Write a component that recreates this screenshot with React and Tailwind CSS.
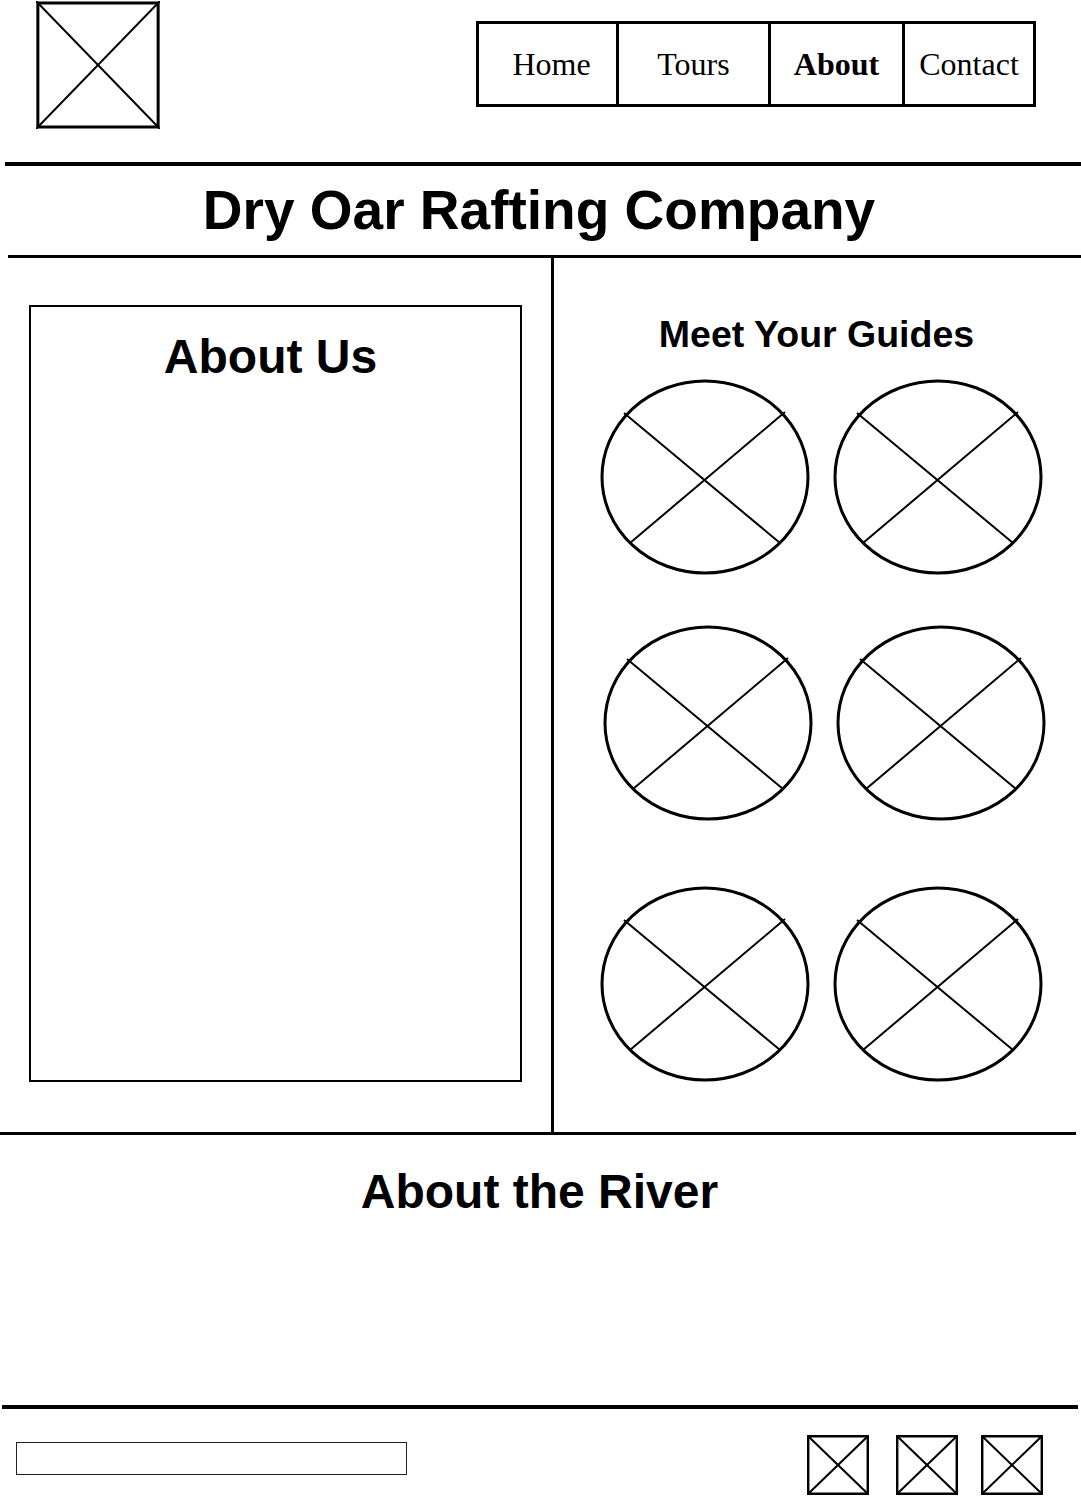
import React from "react";

const sans = { fontFamily: '"Liberation Sans", Arial, sans-serif' };

const CrossBox = ({ className }) => (
  <svg className={className} viewBox="0 0 100 100" preserveAspectRatio="none">
    <rect x="1.5" y="1.5" width="97" height="97" fill="none" stroke="black" strokeWidth="3" vectorEffect="non-scaling-stroke" />
    <line x1="0" y1="0" x2="100" y2="100" stroke="black" strokeWidth="2" vectorEffect="non-scaling-stroke" />
    <line x1="100" y1="0" x2="0" y2="100" stroke="black" strokeWidth="2" vectorEffect="non-scaling-stroke" />
  </svg>
);

const Guide = () => (
  <svg className="w-[210px] h-[196px] shrink-0" viewBox="0 0 210 196">
    <ellipse cx="105" cy="98" rx="103" ry="96" fill="none" stroke="black" strokeWidth="3" />
    <line x1="24" y1="34" x2="180" y2="164" stroke="black" strokeWidth="2" />
    <line x1="185" y1="33" x2="30" y2="164" stroke="black" strokeWidth="2" />
  </svg>
);

const NavItem = ({ children, bold, w, last }) => (
  <div
    className={`flex items-center justify-center h-full text-[32px] ${w} ${last ? "" : "border-r-[3px] border-black"} ${bold ? "font-bold" : ""}`}
    style={{ fontFamily: '"Liberation Serif", "Times New Roman", serif' }}
  >
    {children}
  </div>
);

export default function App() {
  return (
    <div className="w-[1081px] h-[1496px] bg-white text-black overflow-hidden" style={sans}>
      {/* header */}
      <header className="flex justify-between items-start h-[162px] pl-[36px] pr-[45px] pt-[1px]">
        <CrossBox className="w-[124px] h-[128px]" />
        <nav className="mt-[20px] h-[86px] w-[560px] flex border-[3px] border-black">
          <NavItem w="w-[140px] pl-[8px]">Home</NavItem>
          <NavItem w="w-[152px]">Tours</NavItem>
          <NavItem w="w-[134px]" bold>About</NavItem>
          <NavItem w="flex-1" last>Contact</NavItem>
        </nav>
      </header>
      <div className="ml-[5px] h-[4px] bg-black" />

      <div className="h-[89px] pt-[13px]">
        <h1 className="text-center text-[55px] font-bold leading-[63px] pr-[3px]">Dry Oar Rafting Company</h1>
      </div>
      <div className="ml-[8px] h-[3px] bg-black" />

      {/* main */}
      <main className="flex h-[874px]">
        <section className="w-[551px] pl-[29px] pt-[47px]">
          <div className="w-[493px] h-[777px] border-2 border-black pt-[22px] pr-[10px]">
            <h2 className="text-center text-[48px] font-bold leading-[55px]">About Us</h2>
          </div>
        </section>
        <div className="w-[3px] bg-black" />
        <section className="flex-1 pt-[55px]">
          <h2 className="text-center text-[37.5px] font-bold leading-[43px] pr-[2px]">Meet Your Guides</h2>
          <div className="flex flex-col pl-[46px] mt-[23px]">
            <div className="flex gap-[23px]">
              <Guide />
              <Guide />
            </div>
            <div className="flex gap-[23px] mt-[50px] pl-[3px]">
              <Guide />
              <Guide />
            </div>
            <div className="flex gap-[23px] mt-[65px]">
              <Guide />
              <Guide />
            </div>
          </div>
        </section>
      </main>
      <div className="w-[1076px] h-[3px] bg-black" />

      <section className="h-[270px] pt-[29px]">
        <h2 className="text-center text-[48px] font-bold leading-[55px] pr-[2px]">About the River</h2>
      </section>
      <div className="ml-[2px] w-[1076px] h-[4px] bg-black" />

      {/* footer */}
      <footer className="flex justify-between pl-[16px] pr-[38px]">
        <div className="mt-[33px] w-[391px] h-[33px] border-[1.5px] border-[#222]" />
        <div className="flex items-start mt-[26px]">
          <CrossBox className="w-[62px] h-[60px]" />
          <CrossBox className="w-[62px] h-[60px] ml-[27px]" />
          <CrossBox className="w-[62px] h-[60px] ml-[23px]" />
        </div>
      </footer>
    </div>
  );
}
